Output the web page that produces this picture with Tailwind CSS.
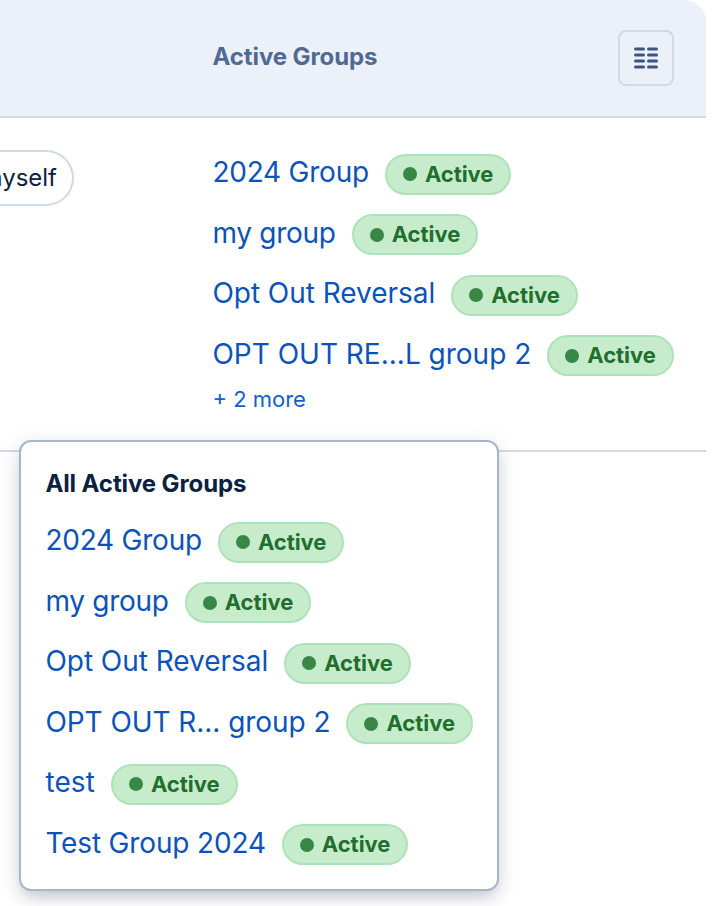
<!doctype html>
<html lang="en">
    <head>
        <meta charset="UTF-8" />
        <meta name="viewport" content="width=device-width, initial-scale=1.0" />
        <title>Active Groups</title>
        <script src="https://cdn.jsdelivr.net/npm/@tailwindcss/browser@4"></script>
    </head>
    <body
        class="relative h-screen overflow-hidden bg-white font-['Inter',sans-serif] text-[#0a2240]"
    >
        <!-- Table -->
        <div class="w-[706px]">
            <div
                class="flex h-[118px] items-start rounded-tr-[22px] border-b-2 border-[#d0d9e6] bg-[#ebf0f9] pl-[212.5px] pr-8 pt-[30px]"
            >
                <div
                    class="mt-[10px] flex-1 text-[24px] leading-[34px] font-[670] tracking-[-0.1px] text-[#516a93]"
                >
                    Active Groups
                </div>
                <button
                    class="flex size-14 items-center justify-center rounded-lg border-2 border-[#d0d9e6]"
                    aria-label="Columns"
                >
                    <svg
                        class="h-6 w-6"
                        viewBox="0 0 24 24"
                        stroke="#3b5580"
                        stroke-width="3"
                        stroke-linecap="round"
                    >
                        <path
                            d="M1.5 3h8M14.5 3h8M1.5 9h8M14.5 9h8M1.5 15h8M14.5 15h8M1.5 21h8M14.5 21h8"
                        />
                    </svg>
                </button>
            </div>

            <div class="flex h-[334px] border-b-2 border-[#d0d9e6]">
                <div class="w-[212.4px] shrink-0 pt-8">
                    <div
                        class="flex h-14 w-[74px] items-center justify-end rounded-r-full border-2 border-l-0 border-[#d0d9e6] pr-[15px] text-[24px] whitespace-nowrap"
                    >
                        myself
                    </div>
                </div>
                <div class="pt-[25px]">
                    <ul id="groups"></ul>
                    <a
                        href="#"
                        class="mt-[-2px] block text-[22px] leading-[32px] text-[#1460c8]"
                        >+ 2 more</a
                    >
                </div>
            </div>
        </div>

        <!-- Popover -->
        <div
            class="absolute top-[440px] left-[19px] h-[451px] w-[480px] rounded-xl border-2 border-[#a9b5cb] bg-white px-[24.4px] pt-[25px] shadow-[0_8px_16px_-4px_rgba(30,45,75,0.25),0_4px_24px_rgba(30,45,75,0.1)]"
        >
            <h2 class="text-[24px] leading-[34px] font-[650] tracking-[-0.1px]">
                All Active Groups
            </h2>
            <ul id="all-groups" class="mt-[10px]"></ul>
        </div>

        <script>
            const tracking = {
                "2024 Group": "tracking-[-0.23px]",
                "my group": "tracking-[-0.27px]",
                "Opt Out Reversal": "tracking-[-0.03px]",
                "OPT OUT R... group 2": "tracking-[-0.06px]",
                test: "tracking-[0.1px]",
                "Test Group 2024": "tracking-[-0.16px]",
            };

            function renderGroups(id, names) {
                document.getElementById(id).innerHTML = names
                    .map(
                        (name) => `
                    <li class="group flex h-[60.5px] items-start gap-4 pt-[10.7px] whitespace-nowrap">
                        <a href="#" class="text-[28px] leading-[37px] text-[#0b53b8] group-even:mt-px ${tracking[name] || ""}">${name}</a>
                        <span class="flex h-[41px] items-center gap-2 rounded-full border-2 border-[#aee2b8] bg-[#c7eccb] px-4 text-[22px] leading-[37px] font-[650] tracking-[-0.04px] text-[#216e2e]">
                            <span class="size-3.5 rounded-full bg-[#388746]"></span>
                            <span>Active</span>
                        </span>
                    </li>`,
                    )
                    .join("");
            }

            renderGroups("groups", [
                "2024 Group",
                "my group",
                "Opt Out Reversal",
                "OPT OUT RE...L group 2",
            ]);
            renderGroups("all-groups", [
                "2024 Group",
                "my group",
                "Opt Out Reversal",
                "OPT OUT R... group 2",
                "test",
                "Test Group 2024",
            ]);
        </script>
    </body>
</html>
